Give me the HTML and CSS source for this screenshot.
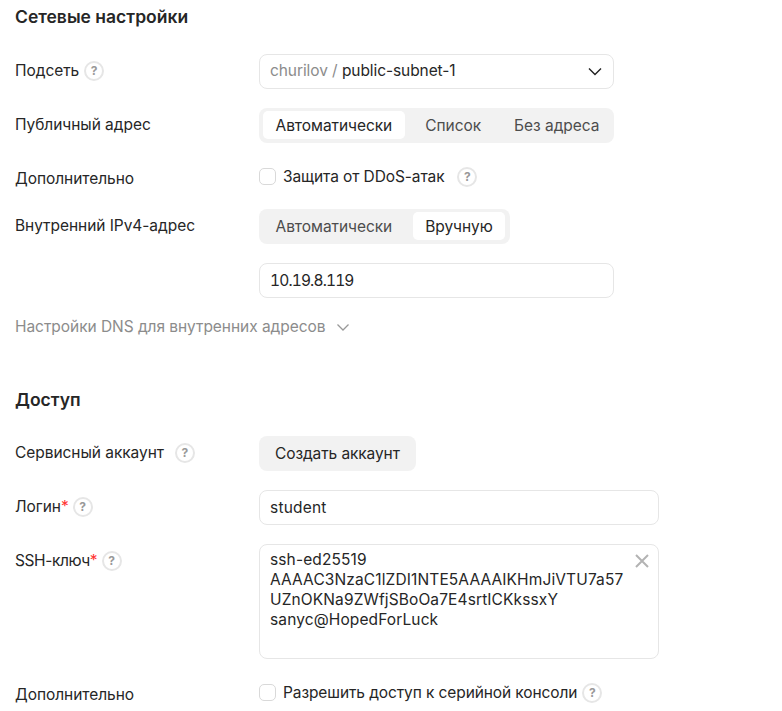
FILE: index.html
```html
<!DOCTYPE html>
<html lang="en">
<head>
<meta charset="UTF-8">
<title>Сетевые настройки</title>
<link rel="stylesheet" href="styles.css">
</head>
<body>
    <div class="form">
        <h2 class="section-title">Сетевые настройки</h2>

        <div class="row">
            <div class="label">Подсеть <span class="help">?</span></div>
            <div class="control control-md">
                <div class="select">
                    <span><span class="muted">churilov /</span> public-subnet-1</span>
                    <svg class="chevron" width="16" height="16" viewBox="0 0 16 16"><path d="M2 5.5l6 6 6-6" fill="none" stroke="#222" stroke-width="1.4"/></svg>
                </div>
            </div>
        </div>

        <div class="row">
            <div class="label">Публичный адрес</div>
            <div class="control control-md">
                <div class="tabs">
                    <div class="tab active">Автоматически</div>
                    <div class="tab">Список</div>
                    <div class="tab">Без адреса</div>
                </div>
            </div>
        </div>

        <div class="row">
            <div class="label">Дополнительно</div>
            <div class="control control-md">
                <label class="check"><span class="box"></span>Защита от DDoS-атак <span class="help help-far">?</span></label>
            </div>
        </div>

        <div class="row">
            <div class="label">Внутренний IPv4-адрес</div>
            <div class="control control-md stack">
                <div class="tabs tabs-short">
                    <div class="tab">Автоматически</div>
                    <div class="tab active">Вручную</div>
                </div>
                <input class="input input-ip" type="text" value="10.19.8.119">
            </div>
        </div>

        <div class="expander">Настройки DNS для внутренних адресов
            <svg class="chevron" width="16" height="16" viewBox="0 0 16 16"><path d="M2.5 5.5l5.5 5.5 5.5-5.5" fill="none" stroke="#999" stroke-width="1.3"/></svg>
        </div>

        <h2 class="section-title section-second">Доступ</h2>

        <div class="row">
            <div class="label">Сервисный аккаунт <span class="help help-far">?</span></div>
            <div class="control">
                <button class="btn" type="button">Создать аккаунт</button>
            </div>
        </div>

        <div class="row">
            <div class="label">Логин<span class="req">*</span> <span class="help">?</span></div>
            <div class="control control-lg">
                <input class="input" type="text" value="student">
            </div>
        </div>

        <div class="row">
            <div class="label"><span class="label-ssh">SSH-ключ</span><span class="req">*</span> <span class="help">?</span></div>
            <div class="control control-lg">
                <div class="area-wrap">
                    <textarea class="area" readonly>ssh-ed25519
AAAAC3NzaC1lZDI1NTE5AAAAIKHmJiVTU7a57
UZnOKNa9ZWfjSBoOa7E4srtICKkssxY
sanyc@HopedForLuck</textarea>
                    <svg class="clear" width="14" height="14" viewBox="0 0 14 14"><path d="M1 1l12 12M13 1L1 13" fill="none" stroke="#b3b3b3" stroke-width="2"/></svg>
                </div>
            </div>
        </div>

        <div class="row">
            <div class="label">Дополнительно</div>
            <div class="control control-lg">
                <label class="check"><span class="box"></span>Разрешить доступ к серийной консоли <span class="help">?</span></label>
            </div>
        </div>
    </div>
</body>
</html>
```

FILE: styles.css
```css
body {
    margin: 0;
    padding: 5px 0 0 15px;
    background-color: #ffffff;
    color: #262626;
    font-family: Inter, "Noto Sans", Arial, sans-serif;
    font-size: 15.5px;
    line-height: 20px;
}
.section-title {
    margin: 0 0 25px;
    font-size: 17.5px;
    line-height: 24px;
    font-weight: 600;
}
.section-second {
    margin-top: 51px;
    margin-bottom: 24px;
}
.row {
    display: flex;
    align-items: flex-start;
    min-height: 28px;
    margin-bottom: 19px;
}
.label {
    width: 244px;
    flex-shrink: 0;
    padding-top: 7px;
    display: flex;
    align-items: center;
    gap: 5px;
    letter-spacing: -0.05px;
}
.label-ssh {
    letter-spacing: -0.4px;
}
.req {
    color: #ff3333;
    margin-left: -5px;
}
.help {
    width: 20px;
    height: 20px;
    box-sizing: border-box;
    border: 2px solid #e6e6e6;
    border-radius: 50%;
    color: #999999;
    font-size: 12px;
    font-weight: 700;
    line-height: 16px;
    text-align: center;
    letter-spacing: 0;
}
.req + .help {
    margin-left: -1px;
}
.help-far {
    margin-left: 6px;
}
.control-md {
    width: 355px;
}
.control-lg {
    width: 400px;
}
.stack {
    display: flex;
    flex-direction: column;
    gap: 19px;
}
.select, .input, .area {
    width: 100%;
    box-sizing: border-box;
    border: 1px solid #e6e6e6;
    border-radius: 8px;
    background-color: #ffffff;
    color: #262626;
    font: inherit;
}
.select, .input {
    height: 35px;
    padding: 0 10px;
}
.select {
    display: flex;
    align-items: center;
    justify-content: space-between;
    padding-bottom: 2px;
    letter-spacing: -0.08px;
}
.input {
    letter-spacing: 0.2px;
}
.input-ip {
    font-variant-numeric: tabular-nums;
    letter-spacing: -0.85px;
}
.muted {
    color: #8c8c8c;
}
.tabs {
    display: flex;
    gap: 8px;
    height: 35px;
    box-sizing: border-box;
    padding: 3px 4px 4px;
    border-radius: 8px;
    background-color: #f2f2f2;
}
.tabs-short {
    width: 251px;
}
.tab {
    padding: 0 12.5px;
    line-height: 29px;
    border-radius: 5px;
    color: #4d4d4d;
    white-space: nowrap;
    letter-spacing: -0.05px;
}
.tab.active {
    background-color: #ffffff;
    color: #262626;
}
.check {
    display: flex;
    align-items: center;
    padding-top: 6px;
    height: 17px;
    letter-spacing: -0.1px;
}
.box {
    width: 17px;
    height: 17px;
    box-sizing: border-box;
    border: 1px solid #d9d9d9;
    border-radius: 5px;
    margin-right: 7px;
}
.check .help {
    margin-left: 5px;
}
.check .help-far {
    margin-left: 13px;
}
.expander {
    display: flex;
    align-items: center;
    gap: 10px;
    color: #8c8c8c;
    letter-spacing: -0.05px;
}
.btn {
    height: 35px;
    padding: 0 16px;
    border: 0;
    border-radius: 8px;
    background-color: #f2f2f2;
    color: #262626;
    font: inherit;
    letter-spacing: -0.1px;
}
.area-wrap {
    position: relative;
}
.area {
    display: block;
    height: 115px;
    padding: 5px 10px;
    resize: none;
    white-space: pre;
    overflow: hidden;
    outline: none;
    letter-spacing: 0.12px;
}
.clear {
    position: absolute;
    top: 10px;
    right: 10px;
}
```
